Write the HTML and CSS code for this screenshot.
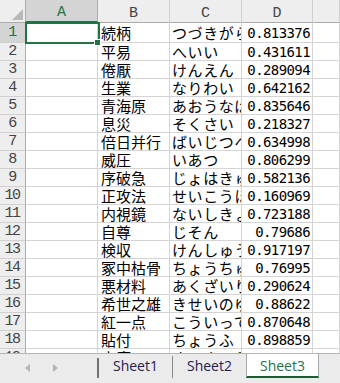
FILE: index.html
```html
<!DOCTYPE html>
<html lang="ja">
<head>
<meta charset="utf-8">
<title>Sheet</title>
<link rel="stylesheet" href="styles.css">
</head>
<body>
<div class="app">
  <div class="sheet">
    <div class="grid">
      <div class="corner"><span class="tri"></span></div>
      <div class="colhead sel">A</div>
      <div class="colhead">B</div>
      <div class="colhead">C</div>
      <div class="colhead">D</div>
      <div class="colhead"></div>

      <div class="rowhead sel">1</div><div class="cell"></div><div class="cell jp">続柄</div><div class="cell kana">つづきがら</div><div class="cell num">0.813376</div><div class="cell"></div>
      <div class="rowhead">2</div><div class="cell"></div><div class="cell jp">平易</div><div class="cell kana">へいい</div><div class="cell num">0.431611</div><div class="cell"></div>
      <div class="rowhead">3</div><div class="cell"></div><div class="cell jp">倦厭</div><div class="cell kana">けんえん</div><div class="cell num">0.289094</div><div class="cell"></div>
      <div class="rowhead">4</div><div class="cell"></div><div class="cell jp">生業</div><div class="cell kana">なりわい</div><div class="cell num">0.642162</div><div class="cell"></div>
      <div class="rowhead">5</div><div class="cell"></div><div class="cell jp">青海原</div><div class="cell kana">あおうなばら</div><div class="cell num">0.835646</div><div class="cell"></div>
      <div class="rowhead">6</div><div class="cell"></div><div class="cell jp">息災</div><div class="cell kana">そくさい</div><div class="cell num">0.218327</div><div class="cell"></div>
      <div class="rowhead">7</div><div class="cell"></div><div class="cell jp">倍日并行</div><div class="cell kana">ばいじつへいこう</div><div class="cell num">0.634998</div><div class="cell"></div>
      <div class="rowhead">8</div><div class="cell"></div><div class="cell jp">威圧</div><div class="cell kana">いあつ</div><div class="cell num">0.806299</div><div class="cell"></div>
      <div class="rowhead">9</div><div class="cell"></div><div class="cell jp">序破急</div><div class="cell kana">じょはきゅう</div><div class="cell num">0.582136</div><div class="cell"></div>
      <div class="rowhead">10</div><div class="cell"></div><div class="cell jp">正攻法</div><div class="cell kana">せいこうほう</div><div class="cell num">0.160969</div><div class="cell"></div>
      <div class="rowhead">11</div><div class="cell"></div><div class="cell jp">内視鏡</div><div class="cell kana">ないしきょう</div><div class="cell num">0.723188</div><div class="cell"></div>
      <div class="rowhead">12</div><div class="cell"></div><div class="cell jp">自尊</div><div class="cell kana">じそん</div><div class="cell num">0.79686</div><div class="cell"></div>
      <div class="rowhead">13</div><div class="cell"></div><div class="cell jp">検収</div><div class="cell kana">けんしゅう</div><div class="cell num">0.917197</div><div class="cell"></div>
      <div class="rowhead">14</div><div class="cell"></div><div class="cell jp">冢中枯骨</div><div class="cell kana">ちょうちゅうここつ</div><div class="cell num">0.76995</div><div class="cell"></div>
      <div class="rowhead">15</div><div class="cell"></div><div class="cell jp">悪材料</div><div class="cell kana">あくざいりょう</div><div class="cell num">0.290624</div><div class="cell"></div>
      <div class="rowhead">16</div><div class="cell"></div><div class="cell jp">希世之雄</div><div class="cell kana">きせいのゆう</div><div class="cell num">0.88622</div><div class="cell"></div>
      <div class="rowhead">17</div><div class="cell"></div><div class="cell jp">紅一点</div><div class="cell kana">こういってん</div><div class="cell num">0.870648</div><div class="cell"></div>
      <div class="rowhead">18</div><div class="cell"></div><div class="cell jp">貼付</div><div class="cell kana">ちょうふ</div><div class="cell num">0.898859</div><div class="cell"></div>
      <div class="rowhead">19</div><div class="cell"></div><div class="cell jp">未塵</div><div class="cell kana">すいきょう</div><div class="cell num">0.499034</div><div class="cell"></div>
    </div>
    <div class="selection"><span class="handle"></span></div>
  </div>
  <div class="tabbar">
    <div class="nav">
      <span class="arrow left"></span>
      <span class="arrow right"></span>
    </div>
    <span class="sep"></span>
    <div class="tab">Sheet1</div>
    <span class="sep thin"></span>
    <div class="tab">Sheet2</div>
    <div class="tab active">Sheet3</div>
  </div>
</div>
</body>
</html>
```

FILE: styles.css
```css
* { box-sizing: border-box; }
html, body { margin: 0; padding: 0; }
body {
  width: 340px;
  height: 383px;
  overflow: hidden;
  background: #ffffff;
  font-family: "Noto Sans CJK JP", "Noto Sans", sans-serif;
}
.app {
  width: 340px;
  height: 383px;
  display: flex;
  flex-direction: column;
}
.sheet {
  position: relative;
  height: 353px;
  overflow: hidden;
  flex: none;
}
.grid {
  display: grid;
  grid-template-columns: 26px 72px 72px 72px 71px 1fr;
  grid-template-rows: 23px 20px;
  grid-auto-rows: 18px;
}
.corner {
  position: relative;
  background: #eeeeee;
  border-right: 1px solid #ababab;
  border-bottom: 1px solid #ababab;
}
.tri {
  position: absolute;
  right: 2px;
  bottom: 2px;
  width: 0;
  height: 0;
  border-left: 11px solid transparent;
  border-bottom: 11px solid #b8b8b8;
}
.colhead {
  background: #eeeeee;
  border-right: 1px solid #d0d0d0;
  border-bottom: 1px solid #ababab;
  font-family: "Liberation Mono", monospace;
  font-size: 15px;
  color: #444444;
  display: flex;
  align-items: center;
  justify-content: center;
  padding-top: 4px;
}
.colhead.sel {
  background: #d4d4d4;
  color: #217346;
  border-bottom: 2px solid #217346;
  border-right-color: #ababab;
}
.rowhead {
  background: #eeeeee;
  border-right: 1px solid #ababab;
  border-bottom: 1px solid #d0d0d0;
  font-family: "Liberation Mono", monospace;
  font-size: 15px;
  color: #444444;
  letter-spacing: -1.5px;
  display: flex;
  align-items: center;
  justify-content: center;
  padding-right: 1px;
}
.rowhead.sel {
  background: #d4d4d4;
  color: #217346;
}
.cell {
  border-right: 1px solid #d4d4d4;
  border-bottom: 1px solid #d4d4d4;
  overflow: hidden;
  white-space: nowrap;
  color: #000000;
  display: flex;
  align-items: center;
}
.jp {
  font-family: "Noto Sans CJK JP", sans-serif;
  font-size: 15px;
  padding-left: 3px;
}
.kana {
  font-family: "Noto Sans CJK JP", sans-serif;
  font-size: 15px;
  letter-spacing: 0.6px;
  padding-left: 2px;
}
.num {
  font-family: "DejaVu Sans Mono", monospace;
  font-size: 14px;
  letter-spacing: -0.6px;
  justify-content: flex-end;
  padding-right: 2px;
}
.selection {
  position: absolute;
  left: 25px;
  top: 22px;
  width: 75px;
  height: 22px;
  border: 2px solid #217346;
}
.handle {
  position: absolute;
  left: 67px;
  top: 15px;
  width: 7px;
  height: 7px;
  background: #217346;
  border: 1px solid #ffffff;
}
.tabbar {
  flex: 1;
  background: #ebebeb;
  border-top: 1px solid #b5b5b5;
  display: flex;
  align-items: flex-start;
}
.nav {
  width: 97px;
  height: 100%;
  display: flex;
  align-items: center;
  gap: 23px;
  padding-left: 25px;
  padding-bottom: 2px;
}
.arrow {
  width: 0;
  height: 0;
  border-top: 4px solid transparent;
  border-bottom: 4px solid transparent;
}
.arrow.left { border-right: 5px solid #b4b4b4; }
.arrow.right { border-left: 5px solid #b4b4b4; }
.sep {
  width: 2px;
  height: 20px;
  margin-top: 4px;
  background: #707070;
  flex: none;
}
.sep.thin {
  width: 1px;
  height: 22px;
  margin-top: 2px;
  background: #8a8a8a;
}
.tab {
  width: 73px;
  height: 24px;
  flex: none;
  font-family: "Open Sans", sans-serif;
  font-size: 14px;
  line-height: 22px;
  padding-top: 1px;
  color: #1f2050;
  text-align: center;
}
.tab.active {
  background: #ffffff;
  color: #217346;
  border-left: 1px solid #a8a8a8;
  border-right: 1px solid #a8a8a8;
  border-bottom: 2px solid #1e5a32;
}
```
